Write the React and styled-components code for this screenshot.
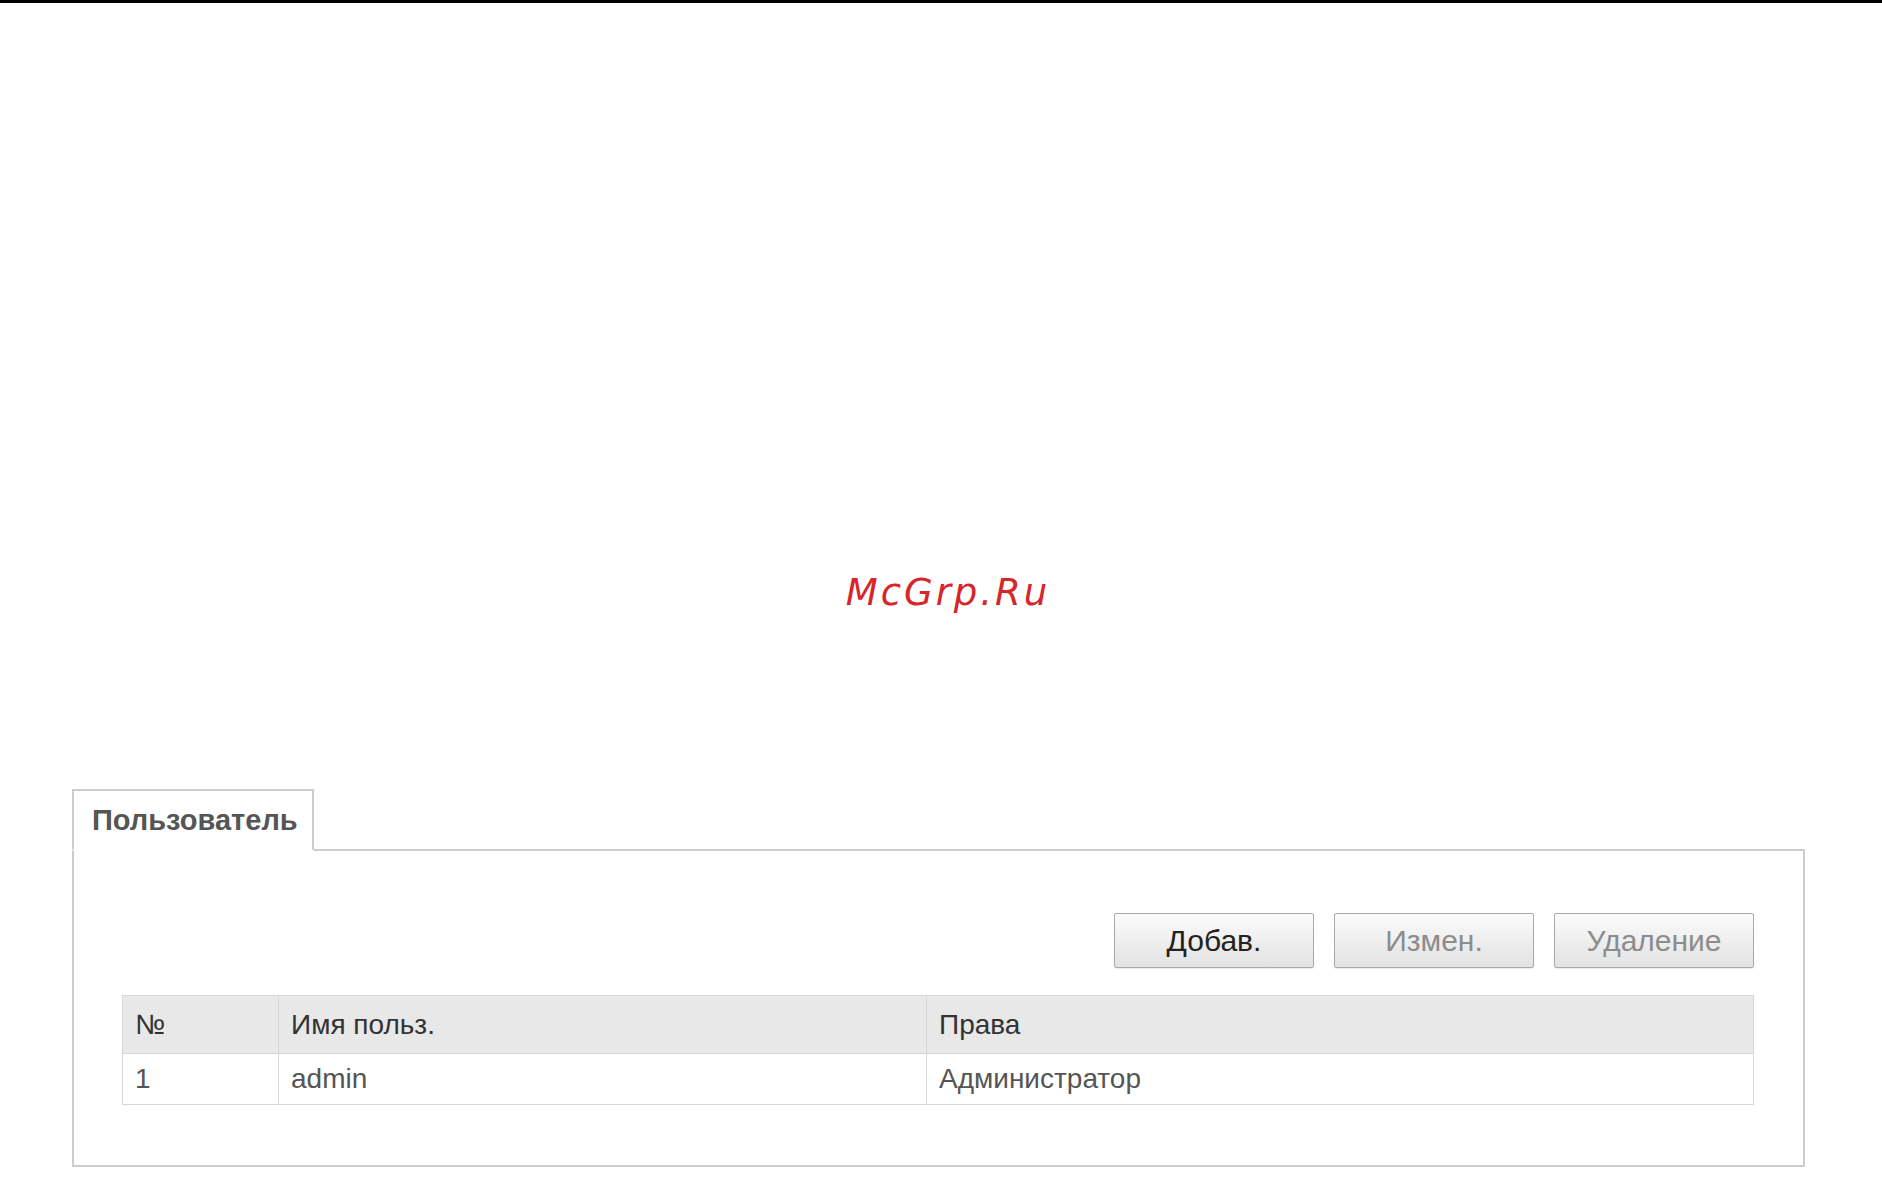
import React from "react";
import styled, { createGlobalStyle } from "styled-components";

const GlobalStyle = createGlobalStyle`
  html, body {
    margin: 0;
    padding: 0;
    background: #fff;
  }
  body {
    font-family: "Liberation Sans", Arial, sans-serif;
  }
`;

const TopBar = styled.div`
  height: 3px;
  background: #000;
`;

const Watermark = styled.div`
  margin-top: 571px;
  padding-left: 14px;
  text-align: center;
  font-family: "DejaVu Sans", sans-serif;
  font-style: oblique;
  font-size: 37px;
  line-height: 37px;
  letter-spacing: 3px;
  color: #d6252b;
`;

const Section = styled.section`
  margin: 178px 77px 0 72px;
`;

const Tab = styled.div`
  position: relative;
  z-index: 1;
  width: 220px;
  height: 58px;
  margin-bottom: -2px;
  padding-left: 18px;
  border: 2px solid #cdcdcd;
  border-bottom: 2px solid #fff;
  background: #fff;
  font-size: 29px;
  line-height: 58px;
  font-weight: bold;
  color: #555;
`;

const Panel = styled.div`
  border: 2px solid #cdcdcd;
  padding: 62px 49px 60px 48px;
`;

const Toolbar = styled.div`
  display: flex;
  justify-content: flex-end;
  gap: 20px;
  margin-bottom: 27px;
`;

const Button = styled.button`
  width: 200px;
  height: 55px;
  padding: 0;
  border: 1px solid #a9a9a9;
  border-radius: 2px;
  background: linear-gradient(#fbfbfb, #e2e2e2);
  box-shadow: 0 1px 1px rgba(0, 0, 0, 0.08);
  font-family: "Liberation Sans", Arial, sans-serif;
  font-size: 30px;
  line-height: 53px;
  color: ${(p) => (p.disabled ? "#8c8c8c" : "#222")};
`;

const Table = styled.table`
  width: 100%;
  border-collapse: collapse;
  table-layout: fixed;
  font-size: 28px;
`;

const Th = styled.th`
  box-sizing: border-box;
  width: ${(p) => p.w || "auto"};
  height: 58px;
  padding: 0 12px;
  border: 1px solid #d6d6d6;
  background: #e8e8e8;
  text-align: left;
  font-weight: normal;
  color: #333;
`;

const Td = styled.td`
  height: 50px;
  padding: 0 12px;
  border: 1px solid #d6d6d6;
  color: #555;
`;

const users = [{ id: 1, name: "admin", role: "Администратор" }];

export default function App() {
  return (
    <>
      <GlobalStyle />
      <TopBar />
      <Watermark>McGrp.Ru</Watermark>
      <Section>
        <Tab>Пользователь</Tab>
        <Panel>
          <Toolbar>
            <Button>Добав.</Button>
            <Button disabled>Измен.</Button>
            <Button disabled>Удаление</Button>
          </Toolbar>
          <Table>
            <thead>
              <tr>
                <Th w="156px">№</Th>
                <Th w="648px">Имя польз.</Th>
                <Th>Права</Th>
              </tr>
            </thead>
            <tbody>
              {users.map((u) => (
                <tr key={u.id}>
                  <Td>{u.id}</Td>
                  <Td>{u.name}</Td>
                  <Td>{u.role}</Td>
                </tr>
              ))}
            </tbody>
          </Table>
        </Panel>
      </Section>
    </>
  );
}
